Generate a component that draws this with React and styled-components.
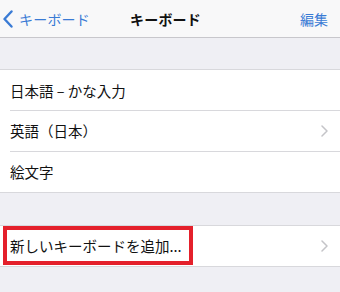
import styled, { createGlobalStyle } from 'styled-components';

const Global = createGlobalStyle`
    html, body {
        margin: 0;
        background: #efeff4;
        font-family: "Noto Sans CJK JP", "Noto Sans", sans-serif;
        -webkit-font-smoothing: antialiased;
    }
`

const Screen = styled.div`
    width: 340px;
    height: 292px;
    background: #efeff4;
    overflow: hidden;
`

const NavBar = styled.div`
    height: 37px;
    background: #f8f8f9;
    border-bottom: 1px solid #c8c7cc;
    display: grid;
    grid-template-columns: 1fr auto 1fr;
    align-items: center;
    padding: 0 12px 0 3px;
`

const Back = styled.div`
    display: flex;
    align-items: center;
    gap: 6px;
    color: #3a7bd5;
    font-size: 14px;
    letter-spacing: 0.2px;
`

const Title = styled.div`
    font-size: 14px;
    font-weight: 700;
    color: #111;
    letter-spacing: 0.2px;
`

const Edit = styled.div`
    justify-self: end;
    color: #3a7bd5;
    font-size: 14px;
`

const Group = styled.div`
    margin-top: ${p => p.$top}px;
    background: #fff;
    border-top: 1px solid #d8d8dc;
    border-bottom: 1px solid #d8d8dc;
`

const Row = styled.div`
    height: 40px;
    display: flex;
    align-items: center;
    justify-content: space-between;
    padding: 0 12px 0 10px;
    font-size: 14.5px;
    color: #111;
    position: relative;

    & + &::before {
        content: "";
        position: absolute;
        top: 0;
        left: 10px;
        right: 0;
        border-top: 1px solid #d8d8dc;
    }
    & + & {
        height: 41px;
    }
`

const Highlight = styled.span`
    box-sizing: border-box;
    height: 39px;
    margin: -1px 0 0 -7px;
    padding: 0 7px 0 3px;
    border: 4px solid #e4202b;
    display: flex;
    align-items: center;
`

const Chevron = () => (
    <svg width="7" height="12" viewBox="0 0 7 12">
        <path d="M1 1l5 5-5 5" fill="none" stroke="#c4c4c8" strokeWidth="1.5" strokeLinecap="round" strokeLinejoin="round" />
    </svg>
)

function App() {
    return (
        <Screen>
            <Global />
            <NavBar>
                <Back>
                    <svg width="10" height="18" viewBox="0 0 10 18">
                        <path d="M8.5 1.5L1.5 9l7 7.5" fill="none" stroke="#3a7bd5" strokeWidth="2.4" strokeLinecap="round" strokeLinejoin="round" />
                    </svg>
                    キーボード
                </Back>
                <Title>キーボード</Title>
                <Edit>編集</Edit>
            </NavBar>

            <Group $top={31}>
                <Row>日本語 – かな入力</Row>
                <Row>英語（日本）<Chevron /></Row>
                <Row>絵文字</Row>
            </Group>

            <Group $top={32}>
                <Row>
                    <Highlight>新しいキーボードを追加...</Highlight>
                    <Chevron />
                </Row>
            </Group>
        </Screen>
    );
}

export default App;
